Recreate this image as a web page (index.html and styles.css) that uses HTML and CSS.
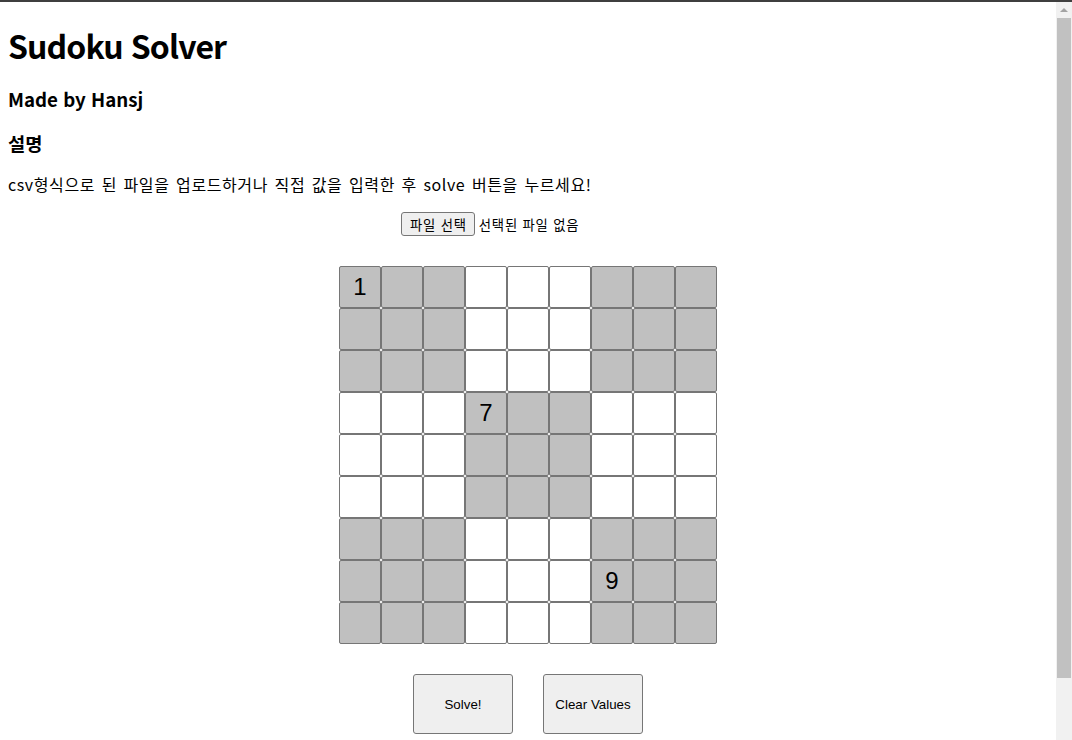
FILE: index.html
```html
<!DOCTYPE html>
<html lang="ko">
<head>
<meta charset="utf-8">
<title>Sudoku Solver</title>
<link rel="stylesheet" href="styles.css">
</head>
<body>
<div class="topline"></div>
<div class="page">
  <h1 class="title">Sudoku Solver</h1>
  <h3 class="sub">Made by Hansj</h3>
  <h3 class="sub">설명</h3>
  <p class="desc">csv형식으로 된 파일을 업로드하거나 직접 값을 입력한 후 solve 버튼을 누르세요!</p>
  <div class="file-row">
    <div class="file-input">
      <span class="file-btn">파일 선택</span>
      <span class="file-text">선택된 파일 없음</span>
    </div>
  </div>
  <div class="board">
    <input class="cell g" value="1"><input class="cell g"><input class="cell g"><input class="cell"><input class="cell"><input class="cell"><input class="cell g"><input class="cell g"><input class="cell g">
    <input class="cell g"><input class="cell g"><input class="cell g"><input class="cell"><input class="cell"><input class="cell"><input class="cell g"><input class="cell g"><input class="cell g">
    <input class="cell g"><input class="cell g"><input class="cell g"><input class="cell"><input class="cell"><input class="cell"><input class="cell g"><input class="cell g"><input class="cell g">
    <input class="cell"><input class="cell"><input class="cell"><input class="cell g" value="7"><input class="cell g"><input class="cell g"><input class="cell"><input class="cell"><input class="cell">
    <input class="cell"><input class="cell"><input class="cell"><input class="cell g"><input class="cell g"><input class="cell g"><input class="cell"><input class="cell"><input class="cell">
    <input class="cell"><input class="cell"><input class="cell"><input class="cell g"><input class="cell g"><input class="cell g"><input class="cell"><input class="cell"><input class="cell">
    <input class="cell g"><input class="cell g"><input class="cell g"><input class="cell"><input class="cell"><input class="cell"><input class="cell g"><input class="cell g"><input class="cell g">
    <input class="cell g"><input class="cell g"><input class="cell g"><input class="cell"><input class="cell"><input class="cell"><input class="cell g" value="9"><input class="cell g"><input class="cell g">
    <input class="cell g"><input class="cell g"><input class="cell g"><input class="cell"><input class="cell"><input class="cell"><input class="cell g"><input class="cell g"><input class="cell g">
  </div>
  <div class="actions">
    <button class="act">Solve!</button>
    <button class="act">Clear Values</button>
  </div>
</div>
<div class="scrollbar">
  <div class="sb-arrow"></div>
  <div class="sb-thumb"></div>
</div>
</body>
</html>
```
FILE: styles.css
```css
html, body {
  margin: 0;
  padding: 0;
  overflow: hidden;
  height: 100%;
  background: #fff;
}
body {
  font-family: "Noto Sans CJK KR", "Noto Sans", sans-serif;
  color: #000;
}
.topline {
  position: fixed;
  left: 0;
  top: 0;
  right: 0;
  height: 2px;
  background: #3f3f3f;
  z-index: 5;
}
.page {
  padding: 0 24px 0 8px;
}
.title {
  font-size: 32px;
  font-weight: 700;
  line-height: 43px;
  letter-spacing: -0.9px;
  margin: 0;
  padding-top: 24px;
}
.sub {
  font-size: 18.72px;
  font-weight: 700;
  line-height: 24px;
  margin: 20px 0 0;
}
.desc {
  font-size: 16px;
  line-height: 22px;
  letter-spacing: 0.6px;
  word-spacing: 1.5px;
  margin: 18px 0 0;
}
.file-row {
  display: flex;
  justify-content: center;
  margin-top: 17px;
}
.file-input {
  width: 254px;
  height: 24px;
  display: flex;
  align-items: center;
  gap: 4px;
  font-size: 13.33px;
  letter-spacing: 0.8px;
}
.file-btn {
  display: inline-flex;
  align-items: center;
  box-sizing: border-box;
  height: 24px;
  padding: 0 7px 0 8px;
  border: 1px solid #767676;
  border-radius: 3px;
  background: #efefef;
}
.board {
  display: grid;
  grid-template-columns: repeat(9, 42px);
  grid-auto-rows: 42px;
  justify-content: center;
  margin-top: 30px;
}
.cell {
  box-sizing: border-box;
  width: 42px;
  height: 42px;
  margin: 0;
  padding: 0;
  border: 1px solid #767676;
  border-radius: 2px;
  background: #fff;
  font-family: "Liberation Sans", Arial, sans-serif;
  font-size: 24px;
  text-align: center;
  color: #000;
  outline: none;
}
.cell.g {
  background: #c0c0c0;
}
.actions {
  display: flex;
  justify-content: center;
  gap: 30px;
  margin-top: 30px;
}
.act {
  width: 100px;
  height: 60px;
  background: #efefef;
  border: 1px solid #767676;
  border-radius: 3px;
  font-family: "Liberation Sans", Arial, sans-serif;
  font-size: 13.33px;
  color: #000;
  padding: 0;
}
.scrollbar {
  position: fixed;
  top: 0;
  right: 0;
  width: 16px;
  height: 100%;
  background: #f1f1f1;
}
.sb-arrow {
  width: 0;
  height: 0;
  margin: 8px auto 0;
  border-left: 4px solid transparent;
  border-right: 4px solid transparent;
  border-bottom: 4px solid #a3a3a3;
}
.sb-thumb {
  position: absolute;
  left: 1px;
  right: 1px;
  top: 18px;
  height: 660px;
  background: #c1c1c1;
}
```
